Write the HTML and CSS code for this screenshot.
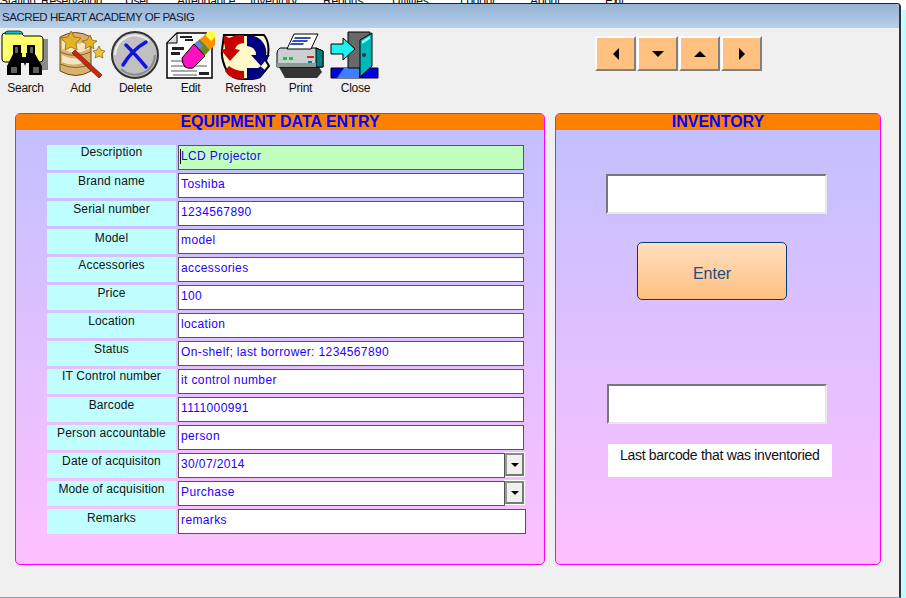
FILE: index.html
```html
<!DOCTYPE html>
<html lang="en">
<head>
  <meta charset="UTF-8">
  <title>Sacred Heart Academy of Pasig</title>
  <link rel="stylesheet" href="styles.css">
</head>
<body>
  <div class="menu-strip">
    <span>Station</span><span>Reservation</span><span>User</span><span>Attendance</span><span>Inventory</span><span>Reports</span><span>Utilities</span><span>Logout</span><span>About</span><span>Exit</span>
  </div>
  <div class="window">
    <div class="title-bar">SACRED HEART ACADEMY OF PASIG</div>
    <div class="top-row">
      <div class="toolbar">
        <div class="tool">
          <svg viewBox="0 0 55 50" width="55" height="50">
            <path d="M45 9h5v31H40z" fill="#8a8a8a"/>
            <path d="M4 6q0-3 3-3h16l3 3h16q3 0 3 3v20q0 3-3 3H7q-3 0-3-3z" fill="#ffff70" stroke="#000"/>
            <path d="M7 4q0-3 3-3h11q3 0 4 3z" fill="#00c8d0" stroke="#000" stroke-width=".7"/>
            <path d="M15 15h8v8h1v4h4v-4h1v-8h8v9l7 12v9H31V33h-3l-1 3-1-3h-3v12H9V36l6-12z" fill="#000"/>
            <path d="M17 17h3v6h-3zM32 17h3v6h-3zM13 37h6v6h-6zM35 37h6v6h-6z" fill="#606060"/>
          </svg>
          <span>Search</span>
        </div>
        <div class="tool">
          <svg viewBox="0 0 55 50" width="55" height="50">
            <path d="M7 7q15-9 31 0v34q-15 9-31 0z" fill="#d8b070" stroke="#6a4a10"/>
            <path d="M9 11q13 6 27 0v8q-14 7-27 0zM9 25q13 6 20 2l3 5q-12 5-23 0z" fill="#f4e6c4"/>
            <path d="M7 22q15 7 31 0M7 34q15 7 31 0" fill="none" stroke="#8a6428"/>
            <path d="M22 20l27 25-3 3-27-25z" fill="#c82810" stroke="#702010" stroke-width=".8"/>
            <path d="M18 1l3 6 7 1-5 5 1 7-6-3-6 3 1-7-5-5 7-1z" fill="#e4b428" stroke="#806010" stroke-width=".7"/>
            <path d="M37 5l2 5 5 1-4 3 1 5-4-3-5 3 1-5-4-3 5-1z" fill="#e4b428" stroke="#806010" stroke-width=".7"/>
            <path d="M46 16l2 4 4 1-3 3 1 4-4-2-4 2 1-4-3-3 4-1z" fill="#ecc438" stroke="#806010" stroke-width=".7"/>
          </svg>
          <span>Add</span>
        </div>
        <div class="tool">
          <svg viewBox="0 0 55 50" width="55" height="50">
            <circle cx="27" cy="25" r="23" fill="#c0c0c0" stroke="#333" stroke-width="2"/>
            <path d="M7 25a20 20 0 0 1 34-14" fill="none" stroke="#ececec" stroke-width="2"/>
            <path d="M47 25a20 20 0 0 1-34 14" fill="none" stroke="#8c8c8c" stroke-width="2"/>
            <path d="M15 35Q24 20 38 12M18 15q9 9 20 22" fill="none" stroke="#1414e0" stroke-width="3.5" stroke-linecap="round"/>
          </svg>
          <span>Delete</span>
        </div>
        <div class="tool">
          <svg viewBox="0 0 55 50" width="55" height="50">
            <path d="M14 3h35v45H4V13z" fill="#fff" stroke="#000" stroke-width="1.5"/>
            <path d="M4 13h10V3z" fill="#ddd" stroke="#000"/>
            <path d="M9 17h12v3H9zM8 22h9v3H8zM17 6h12v2H17zM22 9h8v2h-8zM36 42h10v3H36z" fill="#222"/>
            <path d="M8 30h12v2H8zM8 35h36v2H8zM8 40h26v2H8zM10 44h24v2H10z" fill="#aaa"/>
            <path d="M37 9l8-7h7v13l-5 5z" fill="#ff9000"/>
            <path d="M44 2h8v5l-4 4-5-5z" fill="#ffff40"/>
            <path d="M31 14l6-5 10 11-6 6z" fill="#6a8a20"/>
            <path d="M31 14l4-3 5 5-4 4z" fill="#7080e0"/>
            <path d="M19 28l12-14 11 12-12 12q-5 1-8-1-3-4-3-9z" fill="#ff10c0" stroke="#000"/>
          </svg>
          <span>Edit</span>
        </div>
        <div class="tool">
          <svg viewBox="0 0 55 50" width="55" height="50">
            <path d="M6 5h40q6 8 4 20l-2 6 3 5-9 11q-8 3-18 2-10 0-15-8Q3 30 4 20z" fill="#fff8c8" stroke="#000" stroke-width="2"/>
            <path d="M6 5l5 3q8-4 15-3v8q-7 0-9 6l5 1-10 11-9-11 4-1q0-3-1-6-1-5 1-8z" fill="#c80000"/>
            <path d="M11 36q6 5 15 5v8q-14 1-19-8z" fill="#c80000"/>
            <path d="M29 5q13 0 18 11 2 5 1 9l4 0-9 11-10-11h5q0-8-9-9z" fill="#000080"/>
            <path d="M29 38h9q4 0 4-2l6 5-7 7q-5 2-12 1z" fill="#000080"/>
          </svg>
          <span>Refresh</span>
        </div>
        <div class="tool">
          <svg viewBox="0 0 55 50" width="55" height="50">
            <path d="M6 37h40l3 5-5 6H12z" fill="#333"/>
            <path d="M4 23q0-3 3-5h36l7 3v16H4z" fill="#c8d0d0" stroke="#000"/>
            <path d="M43 18l7 3v16h-7z" fill="#008080" stroke="#000"/>
            <path d="M21 4h24l-7 15H14z" fill="#fff" stroke="#000"/>
            <path d="M22 7h16l-1 2H21zM20 10h15l-1 2H19zM18 13h13l-1 2H17z" fill="#3a50b0"/>
            <path d="M10 27h4v3h-4zM16 27h4v3h-4z" fill="#20c040"/>
            <path d="M34 26h7v2h-7z" fill="#e02020"/>
            <path d="M35 31h4v4h-4z" fill="#008080"/>
            <path d="M4 33h39v4H4z" fill="#909898"/>
          </svg>
          <span>Print</span>
        </div>
        <div class="tool">
          <svg viewBox="0 0 55 50" width="55" height="50">
            <path d="M3 38h47v10H3z" fill="#0000e0" stroke="#000"/>
            <path d="M9 48l7-10h15v10z" fill="#3c80ff"/>
            <path d="M20 2h22v36H20z" fill="#686868" stroke="#000"/>
            <path d="M32 10L44 3v33L32 47z" fill="#00b8b8" stroke="#000"/>
            <path d="M34 11l8-5v3l-8 5z" fill="#80ffff"/>
            <circle cx="36" cy="25" r="2" fill="#333"/>
            <path d="M3 14h12V8l12 11-12 11v-6H3z" fill="#20f0f0" stroke="#000"/>
          </svg>
          <span>Close</span>
        </div>
      </div>
      <div class="nav-buttons">
        <button class="nav-btn"><i class="tri tri-left"></i></button>
        <button class="nav-btn"><i class="tri tri-down"></i></button>
        <button class="nav-btn"><i class="tri tri-up"></i></button>
        <button class="nav-btn"><i class="tri tri-right"></i></button>
      </div>
    </div>
    <div class="panels">
      <section class="panel panel-entry">
        <h2 class="panel-title">EQUIPMENT DATA ENTRY</h2>
        <div class="form-grid">
          <label class="label-high">Description</label>
          <div class="field field-active"><span class="caret"></span>LCD Projector</div>
          <label>Brand name</label>
          <div class="field">Toshiba</div>
          <label>Serial number</label>
          <div class="field">1234567890</div>
          <label class="label-low">Model</label>
          <div class="field">model</div>
          <label>Accessories</label>
          <div class="field">accessories</div>
          <label>Price</label>
          <div class="field">100</div>
          <label>Location</label>
          <div class="field">location</div>
          <label>Status</label>
          <div class="field">On-shelf; last borrower: 1234567890</div>
          <label class="label-high">IT Control number</label>
          <div class="field">it control number</div>
          <label>Barcode</label>
          <div class="field">1111000991</div>
          <label>Person accountable</label>
          <div class="field">person</div>
          <label>Date of acquisiton</label>
          <div class="combo">
            <div class="field">30/07/2014</div>
            <div class="drop"><i class="tri tri-down tri-small"></i></div>
          </div>
          <label>Mode of acquisition</label>
          <div class="combo">
            <div class="field">Purchase</div>
            <div class="drop"><i class="tri tri-down tri-small"></i></div>
          </div>
          <label class="label-low">Remarks</label>
          <div class="field field-wide">remarks</div>
        </div>
      </section>
      <section class="panel panel-inventory">
        <h2 class="panel-title">INVENTORY</h2>
        <div class="inv-body">
          <div class="sunken sunken-first"></div>
          <button class="enter-btn">Enter</button>
          <div class="sunken sunken-second"></div>
          <div class="last-note">Last barcode that was inventoried</div>
        </div>
      </section>
    </div>
  </div>
</body>
</html>
```

FILE: styles.css
```css
html, body {
  height: 598px;
  overflow: hidden;
}

body {
  margin: 0;
  background: linear-gradient(#fff 10px, #bfffff 10px);
  font-family: "Liberation Sans", Arial, sans-serif;
  font-size: 12px;
  color: #111;
}

.menu-strip {
  width: 900px;
  height: 3px;
  overflow: hidden;
  display: grid;
  grid-template-columns: 41px 84px 52px 73px 73px 69px 68px 70px 75px 50px;
  line-height: 3px;
  letter-spacing: -0.25px;
  align-items: end;
}

.menu-strip span {
  margin-top: -7px;
  white-space: nowrap;
}

.window {
  width: 899px;
  height: 593px;
  border-top: 1px solid #222;
  border-right: 2px solid #333;
  border-bottom: 1px solid #4fb8e0;
  border-top-right-radius: 4px;
  background-color: #f0f0f0;
  display: flex;
  flex-direction: column;
}

.title-bar {
  height: 24px;
  padding-left: 2px;
  line-height: 26px;
  font-size: 11.5px;
  letter-spacing: -0.45px;
  background: linear-gradient(#94b2d2, #b8d0ea);
  border-top-right-radius: 4px;
  color: #151a30;
}

.top-row {
  height: 85px;
  display: flex;
}

.toolbar {
  display: flex;
  margin-left: -2px;
  width: 597px;
}

.tool {
  width: 55px;
  display: flex;
  flex-direction: column;
  align-items: center;
  padding-top: 2px;
}

.tool svg {
  display: block;
}

.tool span {
  margin-top: 1px;
  line-height: 14px;
  letter-spacing: -0.25px;
}

.nav-buttons {
  display: flex;
  gap: 1px;
  padding-top: 8px;
  height: 35px;
}

.nav-btn {
  width: 41px;
  height: 35px;
  padding: 0;
  background-color: #ffc080;
  border: 2px solid;
  border-color: #fff #808080 #808080 #fff;
  display: flex;
  align-items: center;
  justify-content: center;
}

.tri {
  display: block;
  width: 0;
  height: 0;
  border-style: solid;
  border-color: transparent;
}

.tri-left {
  border-width: 6px 6px 6px 0;
  border-right-color: #000;
}

.tri-right {
  border-width: 6px 0 6px 6px;
  border-left-color: #000;
}

.tri-up {
  border-width: 0 6px 6px;
  border-bottom-color: #000;
}

.tri-down {
  border-width: 6px 6px 0;
  border-top-color: #000;
}

.tri-small {
  border-width: 4px 4px 0;
}

.panels {
  display: flex;
  gap: 10px;
  padding-left: 15px;
}

.panel {
  height: 452px;
  box-sizing: border-box;
  border: 1px solid #ff00ff;
  border-radius: 5px;
  background: linear-gradient(#c0c0ff, #ffc0ff);
  overflow: hidden;
}

.panel-entry {
  width: 530px;
}

.panel-inventory {
  width: 326px;
}

.panel-title {
  margin: 0;
  height: 16px;
  line-height: 16px;
  background-color: #ff8000;
  color: #0000ff;
  font-size: 16px;
  font-weight: bold;
  text-align: center;
}

.form-grid {
  display: grid;
  grid-template-columns: 129px 346px;
  column-gap: 2px;
  grid-auto-rows: 25px;
  row-gap: 3px;
  padding: 15px 0 0 31px;
}

.form-grid label {
  background-color: #bfffff;
  text-align: center;
  line-height: 17px;
  letter-spacing: 0.15px;
  color: #111;
}

.form-grid .label-high {
  line-height: 15px;
}

.form-grid .label-low {
  line-height: 19px;
}

.field {
  box-sizing: border-box;
  height: 25px;
  border: 1px solid #555;
  background-color: #fff;
  color: #2200ff;
  padding-left: 2px;
  line-height: 20px;
  letter-spacing: 0.38px;
  white-space: nowrap;
  position: relative;
}

.field-active {
  background-color: #c0ffc0;
}

.field-wide {
  width: 348px;
}

.caret {
  position: absolute;
  left: 1px;
  top: 3px;
  width: 1px;
  height: 15px;
  background-color: #111;
}

.combo {
  display: flex;
}

.combo .field {
  flex: 1;
}

.drop {
  width: 19px;
  height: 23px;
  box-sizing: border-box;
  border: 2px solid;
  border-color: #888 #777 #777 #999;
  outline: 1px solid #fff;
  background-color: #f0f0f0;
  display: flex;
  align-items: center;
  justify-content: center;
}

.inv-body {
  display: flex;
  flex-direction: column;
  align-items: flex-start;
  padding-left: 50px;
}

.sunken {
  box-sizing: border-box;
  height: 40px;
  background-color: #fff;
  border: 2px solid;
  border-color: #777 #e8e8e8 #e8e8e8 #777;
}

.sunken-first {
  width: 221px;
  margin-top: 44px;
}

.sunken-second {
  width: 220px;
  margin: 84px 0 0 1px;
}

.enter-btn {
  width: 150px;
  height: 58px;
  margin: 28px 0 0 31px;
  padding: 5px 0 0;
  border: 1px solid #003c80;
  border-radius: 5px;
  background: linear-gradient(#fedfc0, #ffc080);
  color: #1c5080;
  font-family: "Liberation Sans", Arial, sans-serif;
  font-size: 16px;
}

.last-note {
  box-sizing: border-box;
  width: 224px;
  height: 33px;
  margin: 20px 0 0 2px;
  padding-left: 12px;
  background-color: #fff;
  color: #111;
  font-size: 14px;
  letter-spacing: -0.3px;
  line-height: 23px;
  white-space: nowrap;
}
```
